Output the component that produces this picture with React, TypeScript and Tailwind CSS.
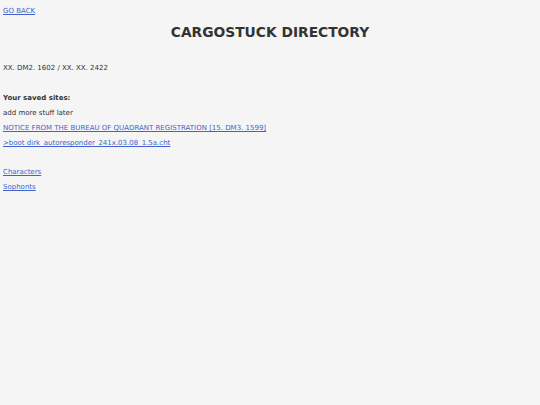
export default function App() {
  return (
    <div className="min-h-screen bg-[#f5f5f5] px-[3px] pt-[6px] text-[7px] leading-[10px] text-[#333333] [font-family:'DejaVu_Sans',Verdana,sans-serif]">
      <a href="#" className="text-[#3f63cf] underline">GO BACK</a>

      <h1 className="mt-[8px] text-center text-[13.8px] leading-[17px] font-bold text-[#333333]">
        CARGOSTUCK DIRECTORY
      </h1>

      <p className="mt-[22px]">XX. DM2. 1602 / XX. XX. 2422</p>

      <div className="mt-[20px] flex flex-col gap-[5px]">
        <p className="font-bold">Your saved sites:</p>
        <p>add more stuff later</p>
        <a href="#" className="text-[#3f63cf] underline">NOTICE FROM THE BUREAU OF QUADRANT REGISTRATION [15. DM3. 1599]</a>
        <a href="#" className="text-[#3f63cf] underline">&gt;boot dirk_autoresponder_241x.03.08_1.5a.cht</a>
      </div>

      {/* directory sections */}
      <div className="mt-[19px] flex flex-col gap-[5px]">
        <a href="#" className="text-[#3f63cf] underline">Characters</a>
        <a href="#" className="text-[#3f63cf] underline">Sophonts</a>
      </div>
    </div>
  )
}
